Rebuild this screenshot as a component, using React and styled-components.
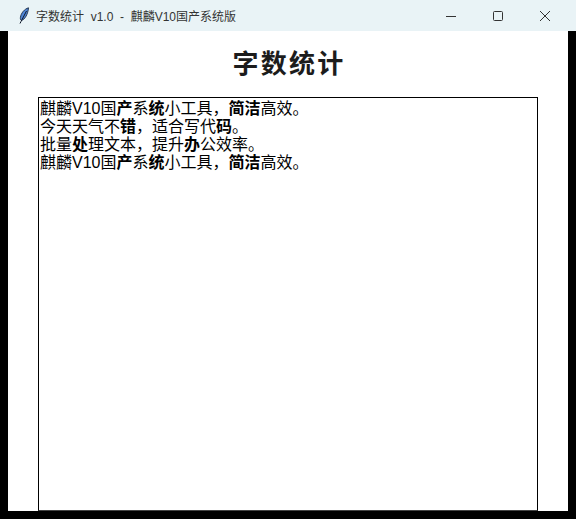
import styled, { createGlobalStyle } from 'styled-components';

const GlobalStyle = createGlobalStyle`
  html, body {
    margin: 0;
    padding: 0;
    background: #000;
  }
`;

const Window = styled.div`
  width: 576px;
  height: 519px;
  display: flex;
  flex-direction: column;
  overflow: hidden;
  background: #000;
  font-family: 'Liberation Sans', 'Noto Sans CJK SC', sans-serif;
`;

const TitleBar = styled.header`
  height: 31px;
  flex-shrink: 0;
  display: flex;
  align-items: center;
  padding: 0 8px 0 18px;
  background: #e9f3f6;
`;

const AppIcon = styled.svg`
  width: 12px;
  height: 17px;
  margin-right: 6px;
`;

const WindowTitle = styled.span`
  flex: 1;
  font-size: 12px;
  color: #333;
  white-space: pre;
`;

const WindowButton = styled.button`
  width: 47px;
  height: 31px;
  padding: 0;
  border: 0;
  background: transparent;
  display: flex;
  align-items: center;
  justify-content: center;
`;

const Panel = styled.main`
  flex: 1;
  min-height: 0;
  margin: 0 8px 8px;
  display: flex;
  flex-direction: column;
  background: #fff;
`;

const Heading = styled.h1`
  margin: 0;
  height: 66px;
  padding: 17px 0 0 2px;
  box-sizing: border-box;
  text-align: center;
  font-size: 26px;
  line-height: 32px;
  font-weight: 700;
  letter-spacing: 2.2px;
  color: #1c1c1c;
`;

const TextBox = styled.div`
  flex: 1;
  min-height: 0;
  width: 500px;
  margin-left: 30px;
  box-sizing: border-box;
  border: 1px solid #000;
  border-bottom-color: #444;
  padding: 2px 1px 0;
  font-size: 16px;
  line-height: 18px;
  color: #000;
`;

const Line = styled.div`
  white-space: pre;
`;

const Strong = styled.b`
  font-weight: 700;
  color: #000;
`;

const lines = [
  ['麒麟V10国', <Strong key="a">产</Strong>, '系', <Strong key="b">统</Strong>, '小工具，', <Strong key="c">简洁</Strong>, '高效。'],
  ['今天天气不', <Strong key="a">错</Strong>, '，适合写代', <Strong key="b">码</Strong>, '。'],
  ['批量', <Strong key="a">处</Strong>, '理文本，提升', <Strong key="b">办</Strong>, '公效率。'],
  ['麒麟V10国', <Strong key="a">产</Strong>, '系', <Strong key="b">统</Strong>, '小工具，', <Strong key="c">简洁</Strong>, '高效。'],
];

export default function App() {
  return (
    <Window>
      <GlobalStyle />
      <TitleBar>
        <AppIcon viewBox="0 0 12 17">
          <path d="M10.5 0.8C6.5 2 3 6 2.4 10.5c-.2 1.6.2 2.6 1 3C7 12.5 10 7 10.5 0.8z" fill="#4f86d8" stroke="#1b2a44" strokeWidth="0.9" />
          <path d="M8.5 4L3 14.5 2 16.5" fill="none" stroke="#10182a" strokeWidth="1" />
        </AppIcon>
        <WindowTitle>字数统计  v1.0  -  麒麟V10国产系统版</WindowTitle>
        <WindowButton aria-label="最小化">
          <svg width="12" height="12" viewBox="0 0 12 12"><path d="M1 6.5h10" stroke="#333" strokeWidth="1" /></svg>
        </WindowButton>
        <WindowButton aria-label="最大化">
          <svg width="12" height="12" viewBox="0 0 12 12"><rect x="1.5" y="1.5" width="9" height="9" rx="1" fill="none" stroke="#333" strokeWidth="1" /></svg>
        </WindowButton>
        <WindowButton aria-label="关闭">
          <svg width="12" height="12" viewBox="0 0 12 12"><path d="M1 1l10 10M11 1L1 11" stroke="#333" strokeWidth="1" /></svg>
        </WindowButton>
      </TitleBar>
      <Panel>
        <Heading>字数统计</Heading>
        <TextBox>
          {lines.map((parts, i) => (
            <Line key={i}>{parts}</Line>
          ))}
        </TextBox>
      </Panel>
    </Window>
  );
}
